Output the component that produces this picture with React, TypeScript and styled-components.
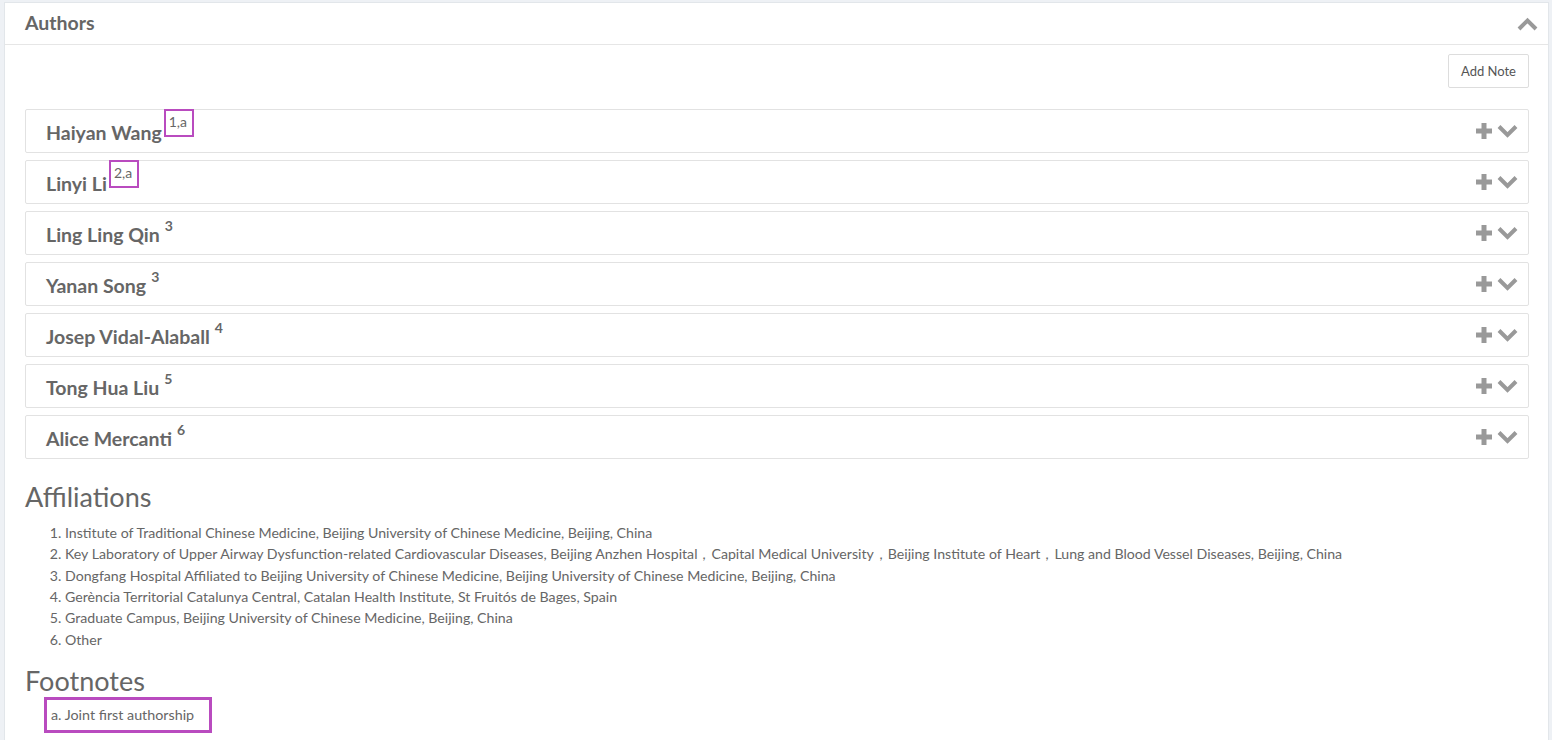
import React from 'react';
import styled, { createGlobalStyle } from 'styled-components';

const GlobalStyle = createGlobalStyle`
  html, body {
    margin: 0;
    padding: 0;
    background: #eef1f5;
  }
  body {
    font-family: Lato, "Source Sans Pro", "Noto Sans", sans-serif;
    color: #666;
  }
  * { box-sizing: border-box; }
`;

const Page = styled.div`
  padding: 2px 3px 0 4px;
  height: 740px;
  overflow: hidden;
`;

const Panel = styled.section`
  background: #fff;
  border: 1px solid #e2e6ea;
  border-bottom: none;
  min-height: 740px;
`;

const PanelHeader = styled.header`
  height: 42px;
  display: flex;
  align-items: center;
  justify-content: space-between;
  padding: 0 10px 0 20px;
  border-bottom: 1px solid #e6e6e6;
`;

const PanelTitle = styled.h3`
  margin: 0 0 2px;
  font-size: 19.5px;
  font-weight: 700;
  color: #666;
`;

const PanelBody = styled.div`
  padding: 9px 19px 20px 20px;
`;

const Toolbar = styled.div`
  display: flex;
  justify-content: flex-end;
`;

const AddNoteButton = styled.button`
  height: 34px;
  padding: 0 12px;
  background: #fff;
  border: 1px solid #ddd;
  border-radius: 2px;
  font-family: inherit;
  font-size: 13px;
  color: #555;
`;

const AuthorList = styled.div`
  margin-top: 21px;
  display: flex;
  flex-direction: column;
  gap: 7px;
`;

const AuthorRow = styled.div`
  height: 44px;
  border: 1px solid #e2e2e2;
  border-radius: 2px;
  display: flex;
  align-items: center;
  justify-content: space-between;
  padding: 0 10px 0 20px;
`;

const AuthorName = styled.span`
  font-size: 19.5px;
  font-weight: 700;
  color: #666;
`;

// marked superscripts carry the purple highlight box
const Sup = styled.sup<{ $marked?: boolean }>`
  font-size: 14px;
  font-weight: ${(p) => (p.$marked ? 400 : 700)};
  margin-left: ${(p) => (p.$marked ? '2px' : '5px')};
  padding: ${(p) => (p.$marked ? '2px 5px 5px 3px' : '0')};
  border: ${(p) => (p.$marked ? '2px solid #b94bbf' : 'none')};
  position: relative;
  top: ${(p) => (p.$marked ? '-5px' : '-3px')};
`;

const RowIcons = styled.div`
  display: flex;
  align-items: center;
  gap: 4px;
  color: #999;
`;

const SectionTitle = styled.h2<{ $tight?: boolean }>`
  margin: ${(p) => (p.$tight ? '16px 0 1px' : '23px 0 10px')};
  font-size: 27px;
  font-weight: 400;
  color: #666;
  line-height: 1.1;
`;

const NoteList = styled.ol`
  margin: 0;
  padding-left: 40px;
  font-size: 14.15px;
  line-height: 21.4px;
  color: #666;
`;

const MarkedBox = styled.div`
  display: inline-block;
  margin-left: 19px;
  border: 3px solid #b94bbf;
  padding: 6px 15px 7px 4px;
  font-size: 14.3px;
  color: #666;
`;

const PlusIcon = () => (
  <svg width="18" height="18" viewBox="0 0 18 18">
    <path d="M9 1v16M1 9h16" stroke="#999" strokeWidth="5" />
  </svg>
);

const Chevron = ({ up }: { up?: boolean }) => (
  <svg width="21" height="14" viewBox="0 0 21 14">
    <path
      d={up ? 'M2 12L10.5 3.5L19 12' : 'M2 2.5L10.5 11L19 2.5'}
      stroke="#999"
      strokeWidth="4"
      fill="none"
    />
  </svg>
);

const authors = [
  { name: 'Haiyan Wang', sup: '1,a', marked: true },
  { name: 'Linyi Li', sup: '2,a', marked: true },
  { name: 'Ling Ling Qin', sup: '3' },
  { name: 'Yanan Song', sup: '3' },
  { name: 'Josep Vidal-Alaball', sup: '4' },
  { name: 'Tong Hua Liu', sup: '5' },
  { name: 'Alice Mercanti', sup: '6' },
];

const affiliations = [
  'Institute of Traditional Chinese Medicine, Beijing University of Chinese Medicine, Beijing, China',
  'Key Laboratory of Upper Airway Dysfunction-related Cardiovascular Diseases, Beijing Anzhen Hospital，Capital Medical University，Beijing Institute of Heart，Lung and Blood Vessel Diseases, Beijing, China',
  'Dongfang Hospital Affiliated to Beijing University of Chinese Medicine, Beijing University of Chinese Medicine, Beijing, China',
  'Gerència Territorial Catalunya Central, Catalan Health Institute, St Fruitós de Bages, Spain',
  'Graduate Campus, Beijing University of Chinese Medicine, Beijing, China',
  'Other',
];

export default function App() {
  return (
    <>
      <GlobalStyle />
      <Page>
        <Panel>
          <PanelHeader>
            <PanelTitle>Authors</PanelTitle>
            <Chevron up />
          </PanelHeader>
          <PanelBody>
            <Toolbar>
              <AddNoteButton>Add Note</AddNoteButton>
            </Toolbar>
            <AuthorList>
              {authors.map((a) => (
                <AuthorRow key={a.name}>
                  <AuthorName>
                    {a.name}
                    <Sup $marked={a.marked}>{a.sup}</Sup>
                  </AuthorName>
                  <RowIcons>
                    <PlusIcon />
                    <Chevron />
                  </RowIcons>
                </AuthorRow>
              ))}
            </AuthorList>
            <SectionTitle>Affiliations</SectionTitle>
            <NoteList>
              {affiliations.map((a) => (
                <li key={a}>{a}</li>
              ))}
            </NoteList>
            <SectionTitle $tight>Footnotes</SectionTitle>
            <MarkedBox>a. Joint first authorship</MarkedBox>
          </PanelBody>
        </Panel>
      </Page>
    </>
  );
}
